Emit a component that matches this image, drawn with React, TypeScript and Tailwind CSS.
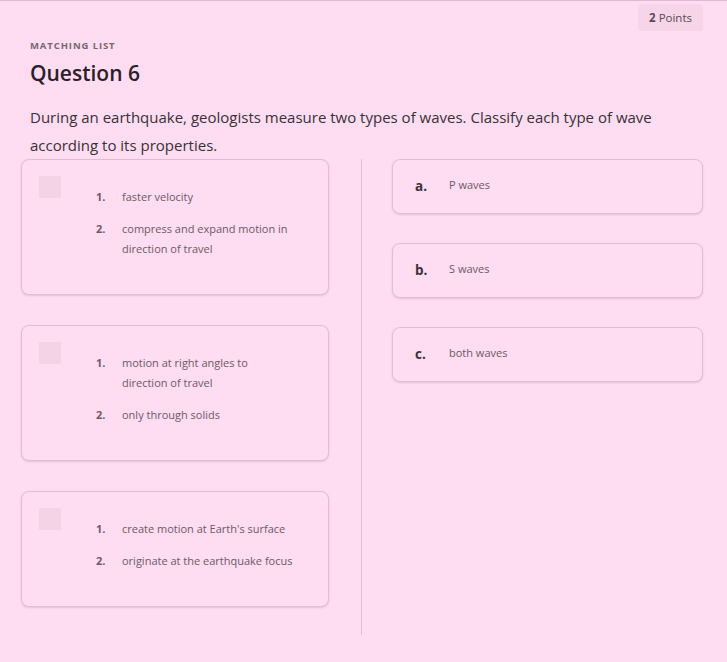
import { Fragment } from 'react';

interface Premise {
  id: string;
  lines: string[][];
}

interface Answer {
  letter: string;
  text: string;
}

const premises: Premise[] = [
  { id: 'p1', lines: [['faster velocity'], ['compress and expand motion in', 'direction of travel']] },
  { id: 'p2', lines: [['motion at right angles to', 'direction of travel'], ['only through solids']] },
  { id: 'p3', lines: [["create motion at Earth's surface"], ['originate at the earthquake focus']] },
];

const answers: Answer[] = [
  { letter: 'a.', text: 'P waves' },
  { letter: 'b.', text: 'S waves' },
  { letter: 'c.', text: 'both waves' },
];

export default function App() {
  return (
    <div
      className="min-h-[662px] w-full bg-[#fedcf1] border-t border-[#e2b9d0]"
      style={{ fontFamily: '"Open Sans", "Noto Sans", sans-serif' }}
    >
      <div className="flex justify-end pr-[24px] pt-[3px]">
        <div className="rounded-[4px] bg-[#f6d5e9] px-[11px] py-[5px] text-[11.5px] leading-[17px] text-[#5a4a54]">
          <span className="font-bold">2</span> Points
        </div>
      </div>

      <div className="px-[30px] pt-[8px]">
        <p className="text-[9.5px] font-bold tracking-[0.9px] text-[#7a6671] leading-[14px]">MATCHING LIST</p>
        <h1 className="mt-[5px] text-[21px] font-semibold leading-[30px] text-[#2b2028]">Question 6</h1>
        <p className="mt-[15px] text-[15px] leading-[28px] text-[#3b3038] pr-[40px]">
          During an earthquake, geologists measure two types of waves. Classify each type of wave
          <br />
          according to its properties.
        </p>
      </div>

      <div className="flex px-[21px] pb-[26px]">
        {/* Premises */}
        <div className="flex w-[308px] flex-col gap-[30px] pb-[28px]">
          {premises.map((p) => (
            <div
              key={p.id}
              className="flex rounded-[8px] border border-[#e3bdd2] bg-[#fedcf1] pl-[17px] pt-[16px] pb-[35px] shadow-[0_1px_2px_rgba(170,110,145,0.25)]"
            >
              <div className="h-[22px] w-[22px] shrink-0 bg-[#f5d3e7]" />
              <div className="ml-[35px] mt-[11px] flex flex-col gap-[12px]">
                {p.lines.map((item, i) => (
                  <div key={i} className="flex text-[11px] leading-[20px]">
                    <span className="w-[26px] shrink-0 font-bold text-[#6f5b67]">{i + 1}.</span>
                    <span className="text-[#6e5a66]">
                      {item.map((l, j) => (
                        <Fragment key={j}>
                          {j > 0 && <br />}
                          {l}
                        </Fragment>
                      ))}
                    </span>
                  </div>
                ))}
              </div>
            </div>
          ))}
        </div>

        {/* Divider */}
        <div className="ml-[32px] mr-[30px] w-px self-stretch bg-[#e0bdd0]" />

        {/* Answers */}
        <div className="flex w-[311px] flex-col gap-[29px]">
          {answers.map((a) => (
            <div
              key={a.letter}
              className="flex h-[55px] items-center rounded-[8px] border border-[#e3bdd2] bg-[#fedcf1] pl-[22px] shadow-[0_1px_2px_rgba(170,110,145,0.25)]"
            >
              <span className="w-[34px] text-[13.5px] font-bold text-[#3d3139]">{a.letter}</span>
              <span className="-mt-[2px] text-[11px] text-[#6e5a66]">{a.text}</span>
            </div>
          ))}
        </div>
      </div>
    </div>
  );
}
